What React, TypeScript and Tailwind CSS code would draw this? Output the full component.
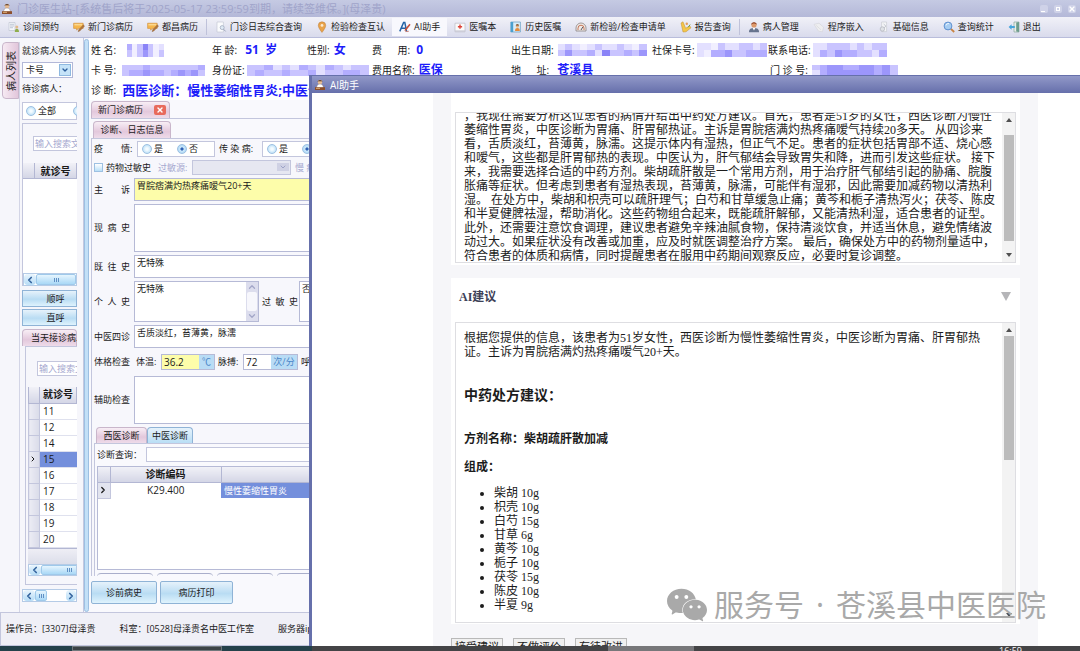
import React from "react";
import {
  ChevronDown,
  ChevronLeft,
  ChevronRight,
  ChevronUp,
  X,
} from "lucide-react";
import { SiWechat } from "react-icons/si";

const uiFont = "font-['Open_Sans','Noto_Sans_CJK_SC',sans-serif]";
const docFont = "font-['Liberation_Serif','Noto_Sans_CJK_SC',serif]";

/* ---------- icons ---------- */

function Icon({ children, className = "size-3" }: { children: React.ReactNode; className?: string }) {
  return (
    <svg viewBox="0 0 12 12" className={`${className} shrink-0`} aria-hidden="true">
      {children}
    </svg>
  );
}

const DoctorIcon = () => (
  <Icon>
    <circle cx="6" cy="3" r="2.3" fill="#e9bd92" />
    <path d="M3.4 2.8C3.5.6 8.5.6 8.6 2.8L7.6 2.2H4.4z" fill="#43281c" />
    <path d="M2.6 9c0-3 1.4-4 3.4-4s3.4 1 3.4 4z" fill="#fff" stroke="#8a6f5e" strokeWidth=".4" />
    <path d="M1 8.2h10V11H1z" fill="#8d4f2b" />
    <path d="M2 8.8h4v1H2z" fill="#e0b27c" />
  </Icon>
);

const ListUserIcon = () => (
  <Icon>
    <path d="M1 1.5h6v8H1z" fill="#f4f6fa" stroke="#b9c0cc" strokeWidth=".6" />
    <path d="M2 3.3h4M2 5h4M2 6.7h3" stroke="#a9b3c4" strokeWidth=".7" />
    <circle cx="8.8" cy="6" r="1.5" fill="#e2b98c" />
    <path d="M6.8 11c0-2.4.9-3.3 2-3.3s2.2.9 2.2 3.3z" fill="#8fae4d" />
  </Icon>
);

const EditIcon = () => (
  <Icon>
    <path d="M.6 2.2h9.6v5.2H5.4L3.6 9.2V7.4h-3z" fill="#f6b64c" stroke="#c9822a" strokeWidth=".5" />
    <path d="M1.4 3h7.8v1.4H1.4z" fill="#fbd890" />
    <path d="M10.3 3.8l1.3 1.2-4.7 5-1.9.7.6-2z" fill="#b3763c" stroke="#7e5a3a" strokeWidth=".3" />
  </Icon>
);

const DocSearchIcon = () => (
  <Icon>
    <path d="M2 1h6.4v10H2z" fill="#fafbfd" stroke="#c0c4d0" strokeWidth=".6" />
    <circle cx="7.2" cy="6.6" r="2" fill="#dfeaf5" stroke="#9aa4b8" strokeWidth=".7" />
    <path d="M8.6 8.2l2 2.2" stroke="#9aa4b8" strokeWidth="1" />
  </Icon>
);

const PinIcon = () => (
  <Icon>
    <path d="M6 .8a3.7 3.7 0 0 1 3.7 3.7C9.7 7 6 11.4 6 11.4S2.3 7 2.3 4.5A3.7 3.7 0 0 1 6 .8z" fill="#e9a34a" stroke="#b97a38" strokeWidth=".5" />
    <circle cx="6" cy="4.4" r="1.4" fill="#fbe9cf" />
  </Icon>
);

const LetterPenIcon = () => (
  <Icon>
    <path d="M.8 10.4L4.6 1.4h1.2l1.8 9M2.4 7.2h4.4" fill="none" stroke="#2463a6" strokeWidth="1.5" />
    <path d="M10.4 2.8l1.2 1-4.3 5.4-1.7.7.4-1.8z" fill="#c4513c" />
    <path d="M6.4 10.6c1.2-.6 2 .4 3.4-.4" stroke="#c4513c" strokeWidth=".7" fill="none" />
  </Icon>
);

const OrderIcon = () => (
  <Icon>
    <path d="M1 2.2h10v8.6H1z" fill="#fafafa" stroke="#b3b3bd" strokeWidth=".6" />
    <path d="M1 9.4h10v1.4H1z" fill="#c9cad6" />
    <path d="M5.3 3.6h1.4V5h1.4v1.4H6.700V7.800H5.300V6.400H3.900V5h1.400z" fill="#dd4338" />
  </Icon>
);

const HistoryIcon = () => (
  <Icon>
    <path d="M.8 1h9.6v10H.8z" fill="#d9ecf7" stroke="#4d90b8" strokeWidth=".6" />
    <path d="M.8 1h2.4v10H.8z" fill="#4aa0cf" />
    <circle cx="7.4" cy="5" r="1.7" fill="#e6b283" />
    <path d="M5.800 4.400c.2-1.600 3-1.600 3.200 0z" fill="#6b4528" />
    <path d="M5 10c0-2.400 1-3 2.400-3s2.400.6 2.400 3z" fill="#e58b3c" />
  </Icon>
);

const GaugeIcon = () => (
  <Icon>
    <path d="M1 10V7a5 5 0 0 1 10 0v3z" fill="#efe9e6" stroke="#8c8484" strokeWidth=".8" />
    <path d="M3 9V7.200a3 3 0 0 1 6 0V9" fill="none" stroke="#c06a4a" strokeWidth=".9" />
    <path d="M6 9l1.800-3" stroke="#4b4b55" strokeWidth=".9" />
  </Icon>
);

const ReportIcon = () => (
  <Icon>
    <path d="M1 2l2-1.200 2.600 6.400L9.800 5l1.200 1.800-5 4-3 .2z" fill="#f3c64a" stroke="#c28e2c" strokeWidth=".5" />
    <circle cx="6.800" cy="2.800" r="1.200" fill="#e29a5a" />
    <path d="M8.200 6.200l2-2.600" stroke="#6fa044" strokeWidth="1" />
  </Icon>
);

const PatientIcon = () => (
  <Icon>
    <path d="M1 11.200C1 7.800 3 7 6 7s5 .8 5 4.200z" fill="#67748e" />
    <path d="M4.600 7h2.800L6 9.400z" fill="#fff" />
    <circle cx="6" cy="4" r="2.600" fill="#dd9a6c" />
    <path d="M3.200 4C3 .2 9 .2 8.800 4 8 2.600 6.600 2.800 5.800 2.600 4.800 2.400 4 3 3.200 4z" fill="#8a3d22" />
  </Icon>
);

const EmbedIcon = () => (
  <Icon>
    <path d="M1 3.400l5-1.200 4.600 4-1.200 4.600-3.800-.6z" fill="#eeeef0" stroke="#d4d4da" strokeWidth=".6" />
    <path d="M3.200 4.400l4.800 4.400" stroke="#dadade" strokeWidth=".8" />
  </Icon>
);

const BaseInfoIcon = () => (
  <Icon>
    <path d="M3.600 1h5v9.600h-5z" fill="#f4f5f7" stroke="#c3c6cd" strokeWidth=".6" />
    <circle cx="4.400" cy="8" r="2.200" fill="#dfe2e6" stroke="#a7abb5" strokeWidth=".6" />
    <path d="M5.600 3l2.400 2.200-2 1.600" stroke="#b8bcc6" strokeWidth=".8" fill="none" />
  </Icon>
);

const MagnifierIcon = () => (
  <Icon>
    <path d="M7.600 7.600l3.600 3.400" stroke="#c98443" strokeWidth="1.800" />
    <circle cx="5" cy="5" r="3.900" fill="#a7cdf2" stroke="#5e8fcf" strokeWidth="1" />
    <path d="M3 4.400C3.400 2.800 5 2.400 6 2.600" stroke="#fff" strokeWidth=".9" fill="none" />
  </Icon>
);

const ExitIcon = () => (
  <Icon>
    <path d="M6 1h5v10H6z" fill="#e8efe9" stroke="#7a9c92" strokeWidth=".6" />
    <path d="M8.200 1.600L11 1v10l-2.800-.6z" fill="#6d9c8c" />
    <path d="M.6 6l3-2.800v1.800h3.200v2H3.600v1.800z" fill="#46a5dc" />
  </Icon>
);

/* ---------- small building blocks ---------- */

const mosaicTones = ["bg-[#e3e0ff]", "bg-[#c9c4ff]", "bg-[#b3adff]", "bg-[#9c96fb]", "bg-[#8a83f7]", "bg-[#f1efff]"];

/* Masked personal data, drawn as a strip of tinted cells. */
function Masked({ cells, className }: { cells: string; className: string }) {
  const rows = cells.split("/");
  return (
    <span className={`flex shrink-0 flex-col ${className}`} aria-hidden="true">
      {rows.map((row, r) => (
        <span key={r} className="flex flex-1">
          {row.split("").map((c, i) => (
            <span key={i} className={`flex-1 ${mosaicTones[Number(c)]}`} />
          ))}
        </span>
      ))}
    </span>
  );
}

const tools: { label: string; icon: () => React.ReactElement; sep?: boolean; active?: boolean }[] = [
  { label: "诊间预约", icon: ListUserIcon },
  { label: "新门诊病历", icon: EditIcon },
  { label: "都昌病历", icon: EditIcon, sep: true },
  { label: "门诊日志综合查询", icon: DocSearchIcon },
  { label: "检验检查互认", icon: PinIcon },
  { label: "AI助手", icon: LetterPenIcon, active: true },
  { label: "医嘱本", icon: OrderIcon },
  { label: "历史医嘱", icon: HistoryIcon },
  { label: "新检验/检查申请单", icon: GaugeIcon },
  { label: "报告查询", icon: ReportIcon, sep: true },
  { label: "病人管理", icon: PatientIcon },
  { label: "程序嵌入", icon: EmbedIcon },
  { label: "基础信息", icon: BaseInfoIcon },
  { label: "查询统计", icon: MagnifierIcon },
  { label: "退出", icon: ExitIcon },
];

function Toolbar() {
  return (
    <nav className="flex h-[21px] shrink-0 items-center overflow-hidden border-b border-[#b9bddb] bg-linear-to-b from-[#f1f1f8] to-[#d9dbec] pl-px">
      {tools.map(({ label, icon: Glyph, sep, active }) => (
        <React.Fragment key={label}>
          <button
            type="button"
            className={`flex h-[18px] shrink-0 items-center gap-[3px] px-[7px] whitespace-nowrap ${active ? "bg-[#f8f8fd]" : ""}`}
          >
            <Glyph />
            {label}
          </button>
          {sep && <span className="mx-px h-4 w-px shrink-0 bg-[#bfc2da]" />}
        </React.Fragment>
      ))}
    </nav>
  );
}

function TitleBar() {
  return (
    <header className="flex h-[17px] shrink-0 items-center gap-1 bg-linear-to-b from-[#c5cae3] to-[#b4b8d8] pr-1 pl-px">
      <DoctorIcon />
      <h1 className="flex-1 truncate text-[11px] leading-4 text-[#a0a4ca]">
        门诊医生站-[系统售后将于2025-05-17 23:59:59到期，请续签维保。](母泽贵)
      </h1>
      <div className="flex gap-[6px]">
        <button type="button" aria-label="最小化" className="flex size-2 items-end rounded-xs bg-[#cfd2e8] p-px">
          <span className="h-px w-1 bg-white" />
        </button>
        <button type="button" aria-label="还原" className="flex size-2 items-center justify-center rounded-xs bg-[#cfd2e8]">
          <span className="size-1 border border-white" />
        </button>
        <button type="button" aria-label="关闭" className="flex size-2 items-center justify-center rounded-xs bg-[#cfd2e8] text-white">
          <X className="size-2" strokeWidth={4} />
        </button>
      </div>
    </header>
  );
}

function Value({ children, className = "text-xs" }: { children: React.ReactNode; className?: string }) {
  return <span className={`font-bold text-[#1d1dfa] ${className}`}>{children}</span>;
}

function PatientHeader() {
  return (
    <section className="h-[62px] shrink-0 overflow-hidden bg-white pt-[2px] pl-[2px] text-[10px] whitespace-pre" aria-label="病人信息">
      <div className="grid h-5 grid-cols-[121px_95px_65px_139px_141px_116px_1fr] items-center">
        <span className="flex items-center gap-2">姓 名: <Masked cells="2514150/1513151" className="h-[13px] w-[37px]" /></span>
        <span className="flex items-center gap-2">年 龄:<Value>51  岁</Value></span>
        <span className="flex items-center gap-1">性别:<Value>女</Value></span>
        <span className="flex items-center gap-[6px]">费      用:<Value>0</Value></span>
        <span className="flex items-center gap-1">出生日期:<Masked cells="010501001051/131120411213" className="h-3 w-[89px]" /></span>
        <span className="flex items-center gap-[2px]">社保卡号:<Masked cells="0051001101/0522311222" className="h-[14px] w-[70px]" /></span>
        <span className="flex items-center gap-[2px]">联系电话:<Masked cells="0011101011/0213221102" className="h-[14px] w-[74px]" /></span>
      </div>
      <div className="grid h-5 grid-cols-[121px_160px_139px_259px_1fr] items-center">
        <span className="flex items-center gap-[6px]">卡 号:<Masked cells="111211111112/122322123231" className="h-[11px] w-[83px]" /></span>
        <span className="flex items-center gap-[2px]">身份证:<Masked cells="11201021021011/12112112011221" className="h-[11px] w-[122px]" /></span>
        <span className="flex items-center gap-1">费用名称:<Value>医保</Value></span>
        <span className="flex items-center gap-2">地      址:<Value>苍溪县</Value></span>
        <span className="flex items-center gap-1">门 诊 号:<Masked cells="12332233231/02333333231" className="h-[11px] w-[86px]" /></span>
      </div>
      <div className="flex h-5 items-center gap-[6px]">
        诊 断:<Value className="text-[13px]">西医诊断：慢性萎缩性胃炎;中医诊断：胃痛、肝胃郁热证</Value>
      </div>
    </section>
  );
}

function HScroll({ className = "", thumb = "flex-1", end = false }: { className?: string; thumb?: string; end?: boolean }) {
  return (
    <div className={`flex shrink-0 overflow-hidden border border-[#b5cbe6] bg-white ${className}`}>
      <button type="button" aria-label="向左滚动" className="flex w-3 shrink-0 items-center justify-center rounded-sm bg-linear-to-b from-[#e9f5fd] to-[#b6dcf6]">
        <ChevronLeft className="size-[10px] text-[#35659f]" strokeWidth={4} />
      </button>
      <div className={`flex items-center justify-center gap-px rounded-xs border border-[#9fc9ea] bg-linear-to-b from-[#e6f5fe] to-[#a9d8f6] ${thumb}`}>
        <span className="h-1 w-px bg-[#5f8fc4]" />
        <span className="h-1 w-px bg-[#5f8fc4]" />
        <span className="h-1 w-px bg-[#5f8fc4]" />
      </div>
      {end && (
        <>
          <span className="flex-1" />
          <button type="button" aria-label="向右滚动" className="flex w-[10px] shrink-0 items-center justify-center rounded-sm bg-linear-to-b from-[#e9f5fd] to-[#b6dcf6]">
            <ChevronRight className="size-[10px] text-[#35659f]" strokeWidth={4} />
          </button>
        </>
      )}
    </div>
  );
}

function BlueButton({ children, className = "" }: { children: React.ReactNode; className?: string }) {
  return (
    <button
      type="button"
      className={`shrink-0 border border-[#8fb3d6] bg-linear-to-b from-[#e6f2fb] via-[#b9dcf3] via-55% to-[#dff3fd] whitespace-nowrap ${className}`}
    >
      {children}
    </button>
  );
}

const radioClass =
  "size-[10px] shrink-0 appearance-none rounded-full border border-[#9dc0e2] bg-[radial-gradient(circle,#f4fbff_20%,#b9dff7_80%)] checked:bg-[radial-gradient(circle,#2f62b5_22%,#cfe9fa_34%,#a9d6f5_80%)]";

function Radio({ name, label, checked = false }: { name: string; label: string; checked?: boolean }) {
  return (
    <label className="flex shrink-0 items-center gap-[2px] whitespace-nowrap">
      <input type="radio" name={name} defaultChecked={checked} className={radioClass} />
      {label}
    </label>
  );
}

const headCell = "border-r border-b border-[#b3b7d3] bg-linear-to-b from-[#f1f1f7] to-[#d4d6e6]";
const pinkTab = "border border-b-0 border-[#c9b6cb] bg-linear-to-b from-[#f8eef5] via-[#e3c8dc] via-60% to-[#eedbe9]";

function Sidebar() {
  const visits = ["11", "12", "14", "15", "16", "17", "18", "19", "20"];
  return (
    <aside className="flex w-[84px] shrink-0 overflow-hidden border-r border-[#c3c8e0] bg-[#f6f6fb] pt-1 pr-[6px]">
      <button
        type="button"
        className="ml-[2px] flex h-[57px] w-[17px] shrink-0 items-center justify-center rounded-l-sm border border-[#c9b6cb] bg-linear-to-r from-[#f6eaf3] to-[#e2c6db]"
      >
        <span className="rotate-180 text-[10px] leading-none [text-orientation:sideways] [writing-mode:vertical-rl]">病人列表</span>
      </button>
      <div className="flex min-w-0 flex-1 flex-col overflow-hidden border-l border-[#d3d5e6] pl-[2px]">
        <h2 className="h-[18px] shrink-0 leading-[18px] whitespace-nowrap">就诊病人列表</h2>
        <div className="relative mt-[2px] h-4 w-[51px] shrink-0">
          <select aria-label="查询方式" className="size-full appearance-none border border-[#b3b8d8] bg-white pl-[3px] leading-3">
            <option>卡号</option>
          </select>
          <span className="pointer-events-none absolute top-[2px] right-[2px] flex size-3 items-center justify-center border border-[#8fb9e0] bg-[#c5e3f8]">
            <ChevronDown className="size-2 text-[#2d5e9c]" strokeWidth={4} />
          </span>
        </div>
        <p className="h-6 shrink-0 leading-[21px] whitespace-nowrap">待诊病人：</p>
        <div className="flex h-[18px] shrink-0 items-center gap-[17px] border border-[#c3c6dd] bg-white pl-[3px]">
          <Radio name="scope" label="全部" />
          <Radio name="scope" label="本人" />
        </div>
        <div className="mt-[3px] flex h-[163px] shrink-0 flex-col border-t border-l border-[#c3c6dd]">
          <input
            aria-label="搜索待诊病人"
            placeholder="输入搜索文本"
            className="mt-3 ml-[10px] h-[15px] w-20 shrink-0 border border-[#c3c6dd] bg-white px-px text-[9px] placeholder:text-[#a5a8cf]"
          />
          <div className="mt-3 flex h-4 shrink-0 text-[10px] font-bold">
            <span className={`w-3 shrink-0 ${headCell}`} />
            <span className={`flex-1 text-center leading-4 whitespace-nowrap ${headCell}`}>就诊号</span>
          </div>
          <div className="flex-1 bg-white" />
          <HScroll className="h-[13px]" />
        </div>
        <BlueButton className="mt-1 h-[17px] pl-3">顺呼</BlueButton>
        <BlueButton className="mt-[2px] h-[17px] pl-3">直呼</BlueButton>
        <h2 className={`mt-[3px] h-[17px] shrink-0 rounded-t-sm pl-2 leading-4 whitespace-nowrap ${pinkTab}`}>当天接诊病人</h2>
        <div className="ml-[3px] flex h-[239px] shrink-0 flex-col border-y border-l border-[#c3c6dd] pt-[14px] pl-[2px]">
          <input
            aria-label="搜索接诊病人"
            placeholder="输入搜索文本"
            className="ml-[9px] h-[15px] w-20 shrink-0 border border-[#c3c6dd] bg-white px-px text-[9px] placeholder:text-[#a5a8cf]"
          />
          <table className="mt-[11px] w-full border-collapse text-[10px]">
            <thead>
              <tr className="h-4">
                <th className={`w-[11px] border-l p-0 ${headCell}`} />
                <th className={`p-0 leading-[15px] whitespace-nowrap ${headCell}`}>就诊号</th>
              </tr>
            </thead>
            <tbody>
              {visits.map((v) => (
                <tr key={v} className="h-4">
                  <td className="border border-[#c3c6dd] bg-linear-to-r from-[#ececf4] to-[#d9dbe9] p-0">
                    {v === "15" && <ChevronRight className="size-2" strokeWidth={3} />}
                  </td>
                  <td className={`border-b border-[#dfe1ee] p-0 pl-[3px] leading-[15px] ${v === "15" ? "bg-[#748fdc]" : "bg-white"}`}>{v}</td>
                </tr>
              ))}
            </tbody>
          </table>
          <div className="flex-1 border-t border-[#b3b7d3] bg-linear-to-b from-[#eeeef5] to-[#dcdeea]" />
          <HScroll className="h-3" thumb="w-14 shrink-0" />
          <span className="h-2 shrink-0" />
        </div>
        <HScroll className="mt-1 h-[13px]" thumb="w-3 shrink-0" end />
      </div>
    </aside>
  );
}

const boxClass = "resize-none overflow-hidden border border-[#b6bad6] px-[2px] leading-[13px]";

function Field({ id, label, value, height, tint = "bg-white" }: { id: string; label: string; value: string; height: string; tint?: string }) {
  return (
    <div className="flex shrink-0 items-center">
      <label htmlFor={id} className="w-10 shrink-0 text-[9px] whitespace-nowrap">{label}</label>
      <textarea id={id} defaultValue={value} className={`min-w-0 flex-1 ${boxClass} ${height} ${tint}`} />
    </div>
  );
}

function RecordForm() {
  return (
    <section className="flex min-w-0 flex-1 flex-col border-t border-l border-[#c3c6dd] bg-[#f7f7fc] pl-[2px]">
      <div className="flex flex-col gap-[3px] pt-px">
        <div className="flex h-[17px] items-center">
          <span className="w-[43px] shrink-0 whitespace-pre">疫　　情:</span>
          <div role="radiogroup" aria-label="疫情" className="flex h-4 w-[78px] shrink-0 items-center gap-[14px] border border-[#c3c6dd] bg-white pl-1">
            <Radio name="epidemic" label="是" />
            <Radio name="epidemic" label="否" checked />
          </div>
          <span className="ml-[4px] w-[43px] shrink-0 whitespace-pre">传 染 病:</span>
          <div role="radiogroup" aria-label="传染病" className="flex h-4 w-[78px] shrink-0 items-center gap-[14px] border border-[#c3c6dd] bg-white pl-1">
            <Radio name="infectious" label="是" />
            <Radio name="infectious" label="否" checked />
          </div>
        </div>
        <div className="flex h-[15px] items-center">
          <label className="flex w-[64px] shrink-0 items-center gap-[3px] whitespace-nowrap">
            <input type="checkbox" className="size-[9px] shrink-0 appearance-none border border-[#9dc0e2] bg-linear-to-b from-white to-[#b9dff7]" />
            药物过敏史
          </label>
          <label htmlFor="allergen" className="w-[34px] shrink-0 whitespace-nowrap text-[#a5a8cf]">过敏源:</label>
          <div className="relative h-[15px] w-[99px] shrink-0">
            <select id="allergen" disabled className="size-full appearance-none border border-[#c3c6dd] bg-[#e6e7f1]">
              <option> </option>
            </select>
            <span className="pointer-events-none absolute top-[3px] right-[2px] flex h-2 w-3 items-center justify-center bg-[#cfd1e4]">
              <ChevronDown className="size-2 text-[#9da2c6]" strokeWidth={3} />
            </span>
          </div>
          <span className="ml-[4px] whitespace-nowrap text-[#a5a8cf]">慢 病</span>
        </div>
        <Field id="chief" label="主　　诉" value="胃脘痞满灼热疼痛嗳气20+天" height="h-[23px]" tint="bg-[#fdfdaa]" />
        <Field id="present" label={"现\u2002病\u2002史"} value="" height="h-12" />
        <Field id="past" label={"既\u2002往\u2002史"} value="无特殊" height="h-[23px]" />
        <div className="flex items-center">
          <label htmlFor="personal" className="w-10 shrink-0 text-[9px] whitespace-nowrap">{"个\u2002人\u2002史"}</label>
          <div className="flex h-[41px] w-[125px] shrink-0 border border-[#b6bad6] bg-white">
            <textarea id="personal" defaultValue="无特殊" className="min-w-0 flex-1 resize-none overflow-hidden px-[2px] leading-[13px]" />
            <div className="flex w-3 flex-col items-center justify-between bg-[#dcdded] text-[#a2a6c8]">
              <ChevronUp className="size-[10px]" strokeWidth={3} />
              <span className="w-[10px] flex-1 rounded-xs bg-[#f7f7fc]" />
              <ChevronDown className="size-[10px]" strokeWidth={3} />
            </div>
          </div>
          <label htmlFor="allergy" className="ml-[3px] w-[37px] shrink-0 text-[9px] whitespace-nowrap">{"过\u2002敏\u2002史"}</label>
          <textarea id="allergy" defaultValue="否认" className={`h-[41px] min-w-0 flex-1 bg-white ${boxClass}`} />
        </div>
        <Field id="four" label="中医四诊" value="舌质淡红，苔薄黄，脉濡" height="h-[23px]" />
        <div className="mt-[2px] flex h-[17px] items-center">
          <span className="w-[42px] shrink-0">体格检查</span>
          <label htmlFor="temp" className="w-[25px] shrink-0">体温:</label>
          <div className="flex h-4 w-[54px] shrink-0 border border-[#b6bad6] bg-[#fdfdaa]">
            <input id="temp" defaultValue="36.2" className="w-[37px] px-[2px] text-[10px]" />
            <span className="flex-1 bg-[#b9dcf5] text-center leading-[14px] text-[#4a86c8]">℃</span>
          </div>
          <label htmlFor="pulse" className="ml-[3px] w-[25px] shrink-0">脉搏:</label>
          <div className="flex h-4 w-[55px] shrink-0 border border-[#b6bad6] bg-white">
            <input id="pulse" defaultValue="72" className="w-[27px] px-[2px] text-[10px]" />
            <span className="flex-1 bg-[#b9dcf5] text-center leading-[14px] whitespace-nowrap text-[#4a86c8]">次/分</span>
          </div>
          <span className="ml-[3px] shrink-0">呼吸:</span>
        </div>
        <div className="mt-[3px] flex flex-col">
          <Field id="aux" label="辅助检查" value="" height="h-12" />
        </div>
      </div>
      <div className="mt-[3px] flex h-4 pl-[2px]" role="tablist">
        <button type="button" role="tab" className={`w-[51px] rounded-t-sm ${pinkTab}`}>西医诊断</button>
        <button type="button" role="tab" className="w-[46px] rounded-t-sm border border-b-0 border-[#8fb3d6] bg-linear-to-b from-[#e6f2fb] to-[#b9def5]">中医诊断</button>
      </div>
      <div className="flex flex-1 flex-col border-t border-l border-[#c3c6dd] bg-[#f9f9fd] pt-[3px] pl-[2px]">
        <div className="flex h-[15px] items-center">
          <label htmlFor="dx" className="w-[49px] shrink-0">诊断查询：</label>
          <input id="dx" className="h-[15px] min-w-0 flex-1 border border-[#c3c6dd] bg-white" />
        </div>
        <div className="mt-1 min-h-0 flex-1 border border-[#b6bad6] bg-white">
          <table className="w-full table-fixed border-collapse text-[10px]">
            <thead>
              <tr className="h-[15px]">
                <th className={`w-3 p-0 ${headCell}`} />
                <th className={`w-[111px] p-0 leading-[14px] ${headCell}`}>诊断编码</th>
                <th className={`p-0 leading-[14px] ${headCell}`}>诊断名称</th>
              </tr>
            </thead>
            <tbody>
              <tr className="h-4">
                <td className="border-r border-b border-[#c3c6dd] bg-[#e2e4ef] p-0">
                  <ChevronRight className="size-[10px]" strokeWidth={3} />
                </td>
                <td className="p-0 text-center leading-[15px]">K29.400</td>
                <td className="bg-[#748fdc] p-0 pl-[3px] text-[9px] leading-[15px] text-white">慢性萎缩性胃炎</td>
              </tr>
            </tbody>
          </table>
        </div>
        <div className="flex h-[6px] shrink-0 gap-1 overflow-hidden pt-[3px]">
          {[0, 1, 2, 3, 4, 5].map((n) => (
            <span key={n} className="h-2 w-14 shrink-0 rounded-t-sm border-t border-[#a9aecb]" />
          ))}
        </div>
      </div>
    </section>
  );
}

function Workspace() {
  return (
    <div className="flex min-w-0 flex-1 flex-col bg-white">
      <PatientHeader />
      <div className="flex min-h-0 flex-1 flex-col bg-[#f9f9fd] pt-px pl-[2px] pb-2">
        <div className={`flex h-[17px] w-[79px] shrink-0 items-center justify-between rounded-t-sm pr-[3px] pl-[6px] ${pinkTab}`}>
          <span className="whitespace-nowrap">新门诊病历</span>
          <button type="button" aria-label="关闭病历" className="flex h-[10px] w-3 items-center justify-center rounded-xs bg-[#e86a5c] text-white">
            <X className="size-2" strokeWidth={4} />
          </button>
        </div>
        <div className="flex min-h-0 flex-1 flex-col border-t border-[#c3c6dd] pt-[2px]">
          <h2 className={`ml-[2px] h-[17px] w-[78px] shrink-0 rounded-t-sm text-center leading-4 whitespace-nowrap ${pinkTab}`}>诊断、日志信息</h2>
          <RecordForm />
          <div className="mt-[5px] flex h-[23px] shrink-0 gap-[3px]">
            <BlueButton className="w-[66px] rounded-xs">诊前病史</BlueButton>
            <BlueButton className="w-[73px] rounded-xs">病历打印</BlueButton>
          </div>
        </div>
      </div>
    </div>
  );
}

/* ---------- AI assistant window ---------- */

const thinking = [
  "，我现在需要分析这位患者的病情并给出中药处方建议。首先，患者是51岁的女性，西医诊断为慢性",
  "萎缩性胃炎，中医诊断为胃痛、肝胃郁热证。主诉是胃脘痞满灼热疼痛嗳气持续20多天。 从四诊来",
  "看，舌质淡红，苔薄黄，脉濡。这提示体内有湿热，但正气不足。患者的症状包括胃部不适、烧心感",
  "和嗳气，这些都是肝胃郁热的表现。中医认为，肝气郁结会导致胃失和降，进而引发这些症状。 接下",
  "来，我需要选择合适的中药方剂。柴胡疏肝散是一个常用方剂，用于治疗肝气郁结引起的胁痛、脘腹",
  "胀痛等症状。但考虑到患者有湿热表现，苔薄黄，脉濡，可能伴有湿邪，因此需要加减药物以清热利",
  "湿。 在处方中，柴胡和枳壳可以疏肝理气；白芍和甘草缓急止痛；黄芩和栀子清热泻火；茯苓、陈皮",
  "和半夏健脾祛湿，帮助消化。这些药物组合起来，既能疏肝解郁，又能清热利湿，适合患者的证型。",
  "此外，还需要注意饮食调理，建议患者避免辛辣油腻食物，保持清淡饮食，并适当休息，避免情绪波",
  "动过大。如果症状没有改善或加重，应及时就医调整治疗方案。 最后，确保处方中的药物剂量适中，",
  "符合患者的体质和病情，同时提醒患者在服用中药期间观察反应，必要时复诊调整。",
];

const herbs = ["柴胡 10g", "枳壳 10g", "白芍 15g", "甘草 6g", "黄芩 10g", "栀子 10g", "茯苓 15g", "陈皮 10g", "半夏 9g"];

function VScroll({ space, thumb }: { space: string; thumb: string }) {
  return (
    <div className="flex w-[13px] shrink-0 flex-col items-center bg-[#f3f3f3]">
      <svg viewBox="0 0 6 4" className="mt-[5px] h-1 w-[6px] shrink-0" aria-hidden="true"><path d="M0 4L3 0l3 4z" fill="#505050" /></svg>
      <span className={`shrink-0 ${space}`} />
      <span className={`w-[10px] shrink-0 bg-[#bcbcbc] ${thumb}`} />
      <span className="flex-1" />
      <svg viewBox="0 0 6 4" className="mb-[5px] h-1 w-[6px] shrink-0" aria-hidden="true"><path d="M0 0l3 4 3-4z" fill="#505050" /></svg>
    </div>
  );
}

function AssistantWindow() {
  return (
    <section
      aria-label="AI助手"
      className="absolute top-[75px] right-0 bottom-[5px] left-[309px] flex flex-col overflow-hidden border-t border-l-[3px] border-[#6670ab] bg-white"
    >
      <header className="flex h-[17px] shrink-0 items-center gap-1 bg-linear-to-b from-[#9299c8] to-[#666fab] pl-[2px] text-[10px] text-white">
        <DoctorIcon />
        AI助手
      </header>
      <div className={`mr-[42px] ml-[121px] min-h-0 flex-1 overflow-hidden bg-[#f6f6f9] px-[18px] text-xs leading-[14px] text-[#1c1c1c] ${docFont}`}>
        <div className="bg-white px-1 pt-[19px] pb-[2px]">
          <div className="flex h-[151px] justify-between overflow-hidden border border-[#dedee2]">
            <div className="-mt-1 pl-2">
              {thinking.map((line) => (
                <p key={line} className="whitespace-nowrap [text-spacing-trim:space-all]">{line}</p>
              ))}
            </div>
            <VScroll space="h-[13px]" thumb="h-[106px]" />
          </div>
        </div>
        <div className="mt-[13px] bg-white px-1 pb-px">
          <div className="flex h-[44px] items-center justify-between pr-[5px] pl-1">
            <h2 className="pb-[6px] font-bold text-[#3d4157]">AI建议</h2>
            <button type="button" aria-label="收起" className="pb-2">
              <svg viewBox="0 0 10 9" className="h-[9px] w-[10px]" aria-hidden="true"><path d="M0 0h10L5 9z" fill="#b5b5b8" /></svg>
            </button>
          </div>
          <div className="flex h-[301px] justify-between overflow-hidden border border-[#dedee2]">
            <article className="pt-2 pl-2">
              <p className="whitespace-nowrap">根据您提供的信息，该患者为51岁女性，西医诊断为慢性萎缩性胃炎，中医诊断为胃痛、肝胃郁热</p>
              <p>证。主诉为胃脘痞满灼热疼痛嗳气20+天。</p>
              <h3 className="mt-[29px] text-sm leading-4 font-bold">中药处方建议：</h3>
              <h4 className="mt-7 font-bold">方剂名称：柴胡疏肝散加减</h4>
              <h4 className="mt-[14px] font-bold">组成：</h4>
              <ul className="mt-3 list-disc pl-[30px]">
                {herbs.map((h) => (
                  <li key={h}>{h}</li>
                ))}
              </ul>
            </article>
            <VScroll space="h-1" thumb="h-[124px]" />
          </div>
        </div>
        <div className="mt-[14px] flex gap-[10px] text-[11px]">
          {["接受建议", "不做评价", "有待改进"].map((label) => (
            <button key={label} type="button" className="h-[18px] w-[52px] border border-[#b9b9b9] bg-[#f0f0f0] leading-3 whitespace-nowrap">
              {label}
            </button>
          ))}
        </div>
      </div>
    </section>
  );
}

export default function App() {
  return (
    <div className={`relative flex h-screen flex-col overflow-hidden bg-[#f6f6fb] text-[9px] leading-3 text-[#1a1a1a] ${uiFont}`}>
      <TitleBar />
      <Toolbar />
      <div className="flex min-h-0 flex-1">
        <Sidebar />
        <div className="mt-px w-[5px] shrink-0 rounded-sm border border-[#9dc0e2] bg-[#c3e0f7]" />
        <Workspace />
      </div>
      <footer className="flex h-[34px] shrink-0 items-center gap-6 border border-[#c3c6dd] bg-[#f0f0f7] pl-[5px] whitespace-nowrap">
        <span>操作员：[3307]母泽贵</span>
        <span>科室：[0528]母泽贵名中医工作室</span>
        <span>服务器ip：</span>
      </footer>
      <div className="flex h-[5px] shrink-0 overflow-hidden bg-[#444446]">
        <span className="w-[72px] bg-[#24414a]" />
        <span className="w-[150px] border border-[#70787c] bg-[#3c4346]" />
        <span className="w-[90px] bg-[#24414a]" />
        <span className="w-[296px]" />
        <span className="w-[86px] bg-[#77777a]" />
        <span className="ml-auto pr-[58px] text-[9px] leading-[10px] text-white">16:59</span>
      </div>

      <AssistantWindow />

      <div className="pointer-events-none absolute right-[34px] bottom-[26px] flex items-center gap-[7px] font-['Noto_Sans','Noto_Sans_CJK_SC',sans-serif] text-[30px] leading-9 whitespace-nowrap text-[#a9a9a9]">
        <SiWechat className="size-10" aria-hidden="true" />
        <span className="flex gap-3">
          <span>服务号</span>
          <span>·</span>
          <span>苍溪县中医医院</span>
        </span>
      </div>
    </div>
  );
}
